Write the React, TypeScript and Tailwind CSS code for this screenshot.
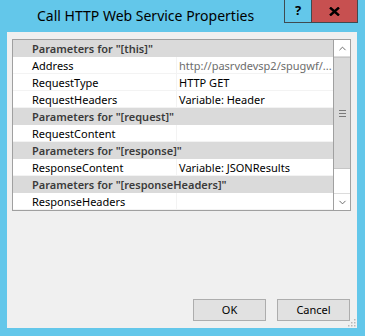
import { ChevronUp, ChevronDown } from "lucide-react";

type Row = { kind: "header"; label: string } | { kind: "item"; name: string; value?: string; muted?: boolean };

const rows: Row[] = [
  { kind: "header", label: 'Parameters for "[this]"' },
  { kind: "item", name: "Address", value: "http://pasrvdevsp2/spugwf/...", muted: true },
  { kind: "item", name: "RequestType", value: "HTTP GET" },
  { kind: "item", name: "RequestHeaders", value: "Variable: Header" },
  { kind: "header", label: 'Parameters for "[request]"' },
  { kind: "item", name: "RequestContent" },
  { kind: "header", label: 'Parameters for "[response]"' },
  { kind: "item", name: "ResponseContent", value: "Variable: JSONResults" },
  { kind: "header", label: 'Parameters for "[responseHeaders]"' },
  { kind: "item", name: "ResponseHeaders" },
];

const PropertyRow = ({ row }: { row: Row }) => {
  if (row.kind === "header") {
    return (
      <div className="h-[17px] flex items-center bg-[#dadada] pl-[19px] font-semibold text-[#3b3b3b] whitespace-nowrap overflow-hidden">
        {row.label}
      </div>
    );
  }
  return (
    <div className="h-[17px] flex bg-white border-b border-[#f3f3f3]">
      <div className="w-[163px] pl-[19px] flex items-center text-black whitespace-nowrap">{row.name}</div>
      <div
        className={`flex-1 flex items-center pl-[2px] border-l border-[#f3f3f3] whitespace-nowrap overflow-hidden ${
          row.muted ? "text-[#6d6d6d]" : "text-black"
        }`}
      >
        {row.value}
      </div>
    </div>
  );
};

export default function App() {
  return (
    <div
      className="w-[365px] h-[336px] bg-[#63c7ea] flex flex-col overflow-hidden"
      style={{ fontFamily: '"Noto Sans", "Open Sans", sans-serif' }}
    >
      {/* title bar */}
      <div className="h-[32px] flex items-start relative">
        <div className="pl-[37px] pt-[5px] text-[14px] text-black leading-[22px]">Call HTTP Web Service Properties</div>
        <div className="absolute left-[284px] top-0 flex h-[23px] border border-t-0 border-[#3f4a50]">
          <div className="w-[27px] flex items-center justify-center font-bold text-[13px] text-black border-r border-[#3f4a50]">
            ?
          </div>
          <div className="w-[45px] bg-[#c75050] flex items-center justify-center">
            <svg width="11" height="9" viewBox="0 0 11 9">
              <path d="M1 0.5 L10 8.5 M10 0.5 L1 8.5" stroke="#000" strokeWidth="2.4" />
            </svg>
          </div>
        </div>
      </div>

      {/* client area */}
      <div className="ml-[7px] w-[350px] h-[296px] bg-[#f0f0f0] flex flex-col relative">
        <div className="mt-[7px] ml-[5px] w-[339px] h-[172px] border border-[#a0a0a0] flex text-[11px] leading-none">
          <div className="flex-1 flex flex-col">
            {rows.map((r, i) => (
              <PropertyRow key={i} row={r} />
            ))}
          </div>
          <div className="w-[17px] flex flex-col bg-white border-l border-[#a0a0a0]">
            <div className="h-[17px] flex items-center justify-center bg-white border-b border-[#dcdcdc]">
              <ChevronUp size={11} strokeWidth={2} className="text-[#606060]" />
            </div>
            <div className="h-[112px] bg-[#dadada] border-y border-[#c6c6c6] flex items-center justify-center">
              <div className="flex flex-col gap-[2px]">
                <div className="w-[7px] h-px bg-[#7a7a7a]" />
                <div className="w-[7px] h-px bg-[#7a7a7a]" />
                <div className="w-[7px] h-px bg-[#7a7a7a]" />
              </div>
            </div>
            <div className="flex-1" />
            <div className="h-[17px] flex items-center justify-center border-t border-[#dcdcdc]">
              <ChevronDown size={11} strokeWidth={2} className="text-[#606060]" />
            </div>
          </div>
        </div>

        <div className="mt-auto mb-[7px] mr-[7px] flex justify-end gap-[11px] text-[11px]">
          <button className="w-[73px] h-[22px] bg-[#e1e1e1] border border-[#adadad] text-black">OK</button>
          <button className="w-[73px] h-[22px] bg-[#e1e1e1] border border-[#adadad] text-black">Cancel</button>
        </div>

        <svg className="absolute right-[1px] bottom-[1px]" width="8" height="8" viewBox="0 0 8 8">
          <rect x="6" y="0" width="1.5" height="1.5" fill="#b8b8b8" />
          <rect x="3" y="3" width="1.5" height="1.5" fill="#b8b8b8" />
          <rect x="6" y="3" width="1.5" height="1.5" fill="#b8b8b8" />
          <rect x="0" y="6" width="1.5" height="1.5" fill="#b8b8b8" />
          <rect x="3" y="6" width="1.5" height="1.5" fill="#b8b8b8" />
          <rect x="6" y="6" width="1.5" height="1.5" fill="#b8b8b8" />
        </svg>
      </div>
    </div>
  );
}
